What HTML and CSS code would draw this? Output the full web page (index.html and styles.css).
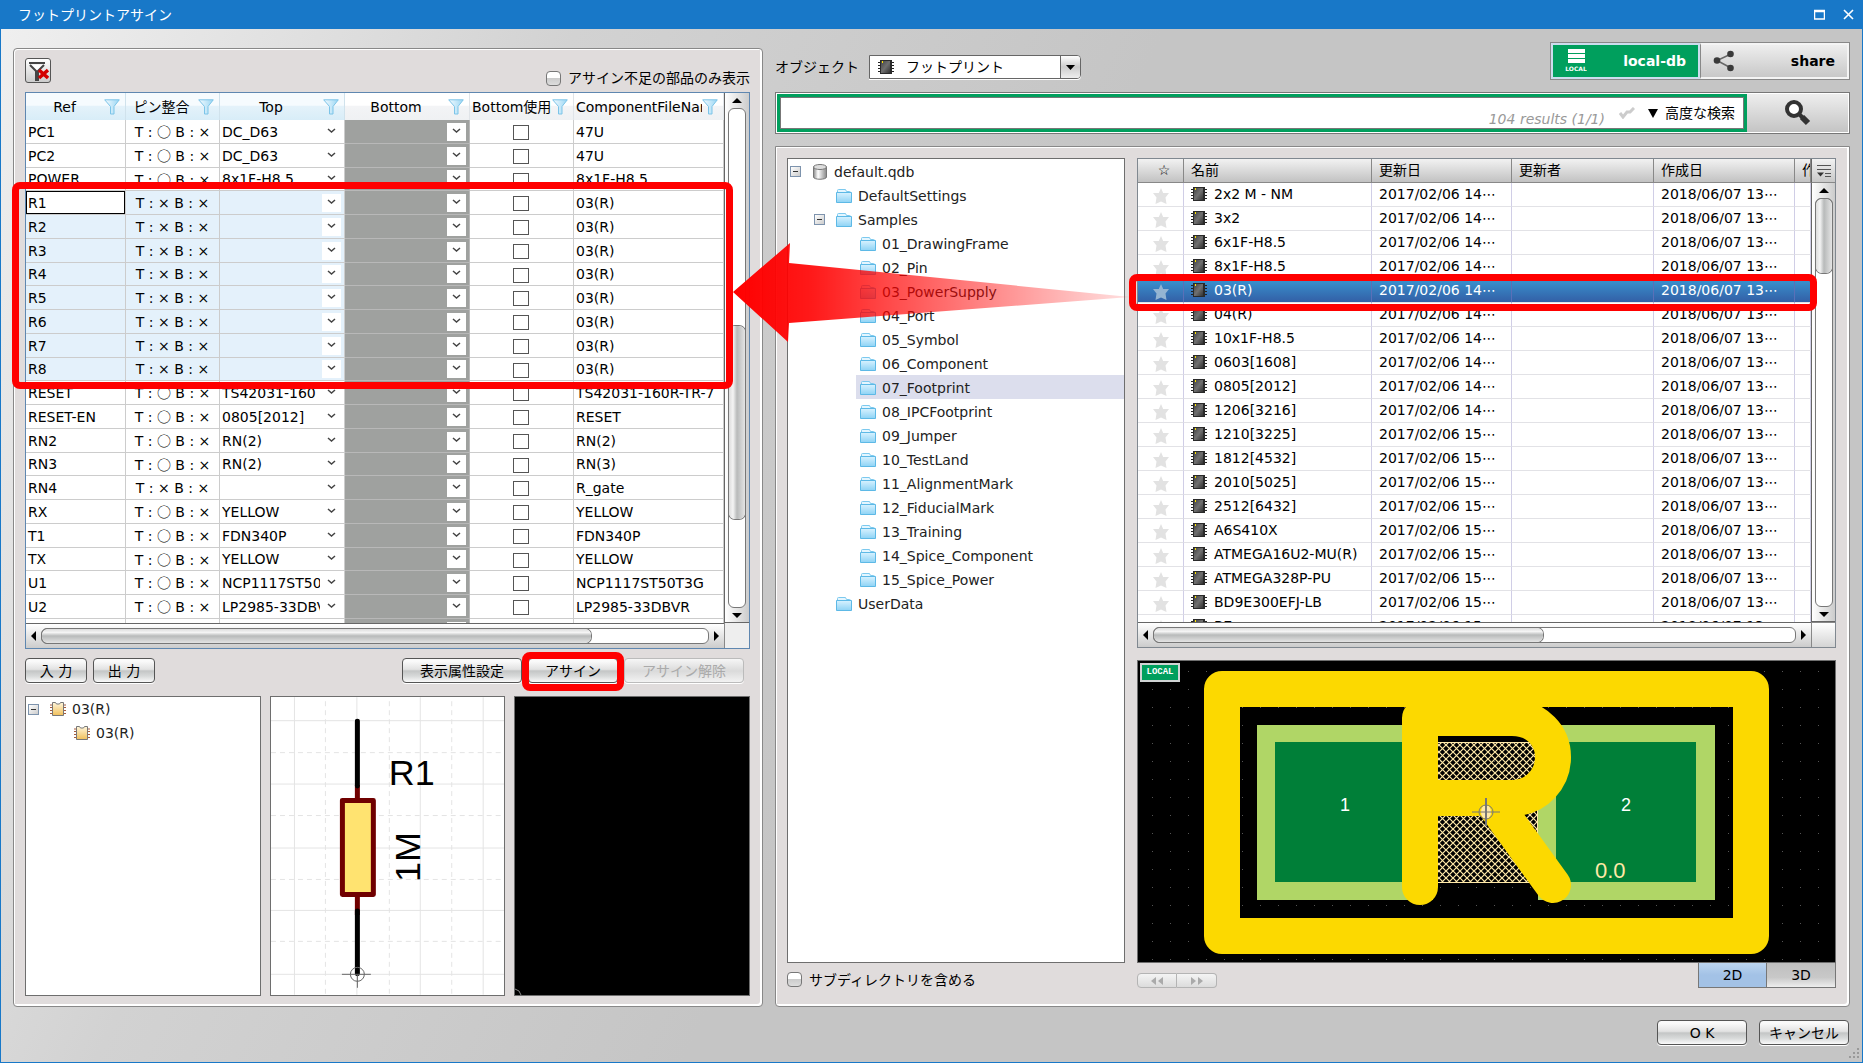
FILE: index.html
```html
<!DOCTYPE html>
<html lang="ja">
<head>
<meta charset="utf-8">
<title>フットプリントアサイン</title>
<link rel="stylesheet" href="styles.css">
</head>
<body>
<svg class="defs" width="0" height="0" aria-hidden="true">
  <defs>
    <linearGradient id="folderFill" x1="0" y1="0" x2="0" y2="1"><stop offset="0" stop-color="#d8f2ff"/><stop offset="1" stop-color="#8ed3f5"/></linearGradient>
    <linearGradient id="funnelFill" x1="0" y1="0" x2="1" y2="0"><stop offset="0" stop-color="#f4fbff"/><stop offset="1" stop-color="#9ad6f3"/></linearGradient>
    <linearGradient id="chipFill" x1="0" y1="0" x2="1" y2="1"><stop offset="0" stop-color="#444"/><stop offset=".5" stop-color="#707070"/><stop offset="1" stop-color="#333"/></linearGradient>
    <linearGradient id="partFill" x1="0" y1="0" x2="0" y2="1"><stop offset="0" stop-color="#fff6dc"/><stop offset="1" stop-color="#f0bf5a"/></linearGradient>
    <linearGradient id="dbFill" x1="0" y1="0" x2="1" y2="0"><stop offset="0" stop-color="#888"/><stop offset=".35" stop-color="#fff"/><stop offset="1" stop-color="#888"/></linearGradient>
    <symbol id="funnel" viewBox="0 0 16 16"><path d="M.7.8h14.6L10 7.5V15H6.500V7.500z" fill="url(#funnelFill)" stroke="#7cc4e8"/></symbol>
    <symbol id="folder" viewBox="0 0 16 14"><path d="M1.500 5V1.500q0-1 1-1H9.500l1 2h3q1 0 1 1V5" fill="#e4f6ff" stroke="#7cc9ee"/><path d="M.5 3.500h15v10H.5z" fill="url(#folderFill)" stroke="#5db9e6"/></symbol>
    <symbol id="chip" viewBox="0 0 16 14"><path d="M0 2.500h16M0 5.500h16M0 8.500h16M0 11.500h16" stroke="#222"/><path d="M2 0h12v14H2z" fill="#2a2a2a"/><path d="M3 1h9v12H3z" fill="url(#chipFill)"/><path d="M4.500 1v2" stroke="#ffe600"/></symbol>
    <symbol id="part" viewBox="0 0 16 14"><path d="M0 3h16M0 5.500h16M0 8.500h16M0 11.500h16" stroke="#a65b3c"/><path d="M2.500.5h3l1 1.500h3l1-1.500h3v13h-11z" fill="url(#partFill)" stroke="#777"/></symbol>
    <symbol id="database" viewBox="0 0 14 16"><path d="M.5 3v10c0 3 13 3 13 0V3z" fill="url(#dbFill)" stroke="#777"/><ellipse cx="7" cy="3" rx="6.500" ry="2.500" fill="#ddd" stroke="#777"/></symbol>
    <symbol id="star" viewBox="0 0 16 16"><path d="m8 0 2.200 5H16l-3.500 4.500 1 6.500L8 13.500 2.500 16l1-6.500L0 5h5.800z"/></symbol>
  </defs>
</svg>

<div class="window">
  <header class="titlebar">
    <h1>フットプリントアサイン</h1>
    <button class="caption" aria-label="最大化"><svg width="11" height="11" viewBox="0 0 11 11"><path d="M.5 1.500h10v8.500H.5zM0 2.500h11" fill="none" stroke="#fff" stroke-width="1.500"/></svg></button>
    <button class="caption" aria-label="閉じる"><svg width="11" height="11" viewBox="0 0 11 11"><path d="m1 1 9 9m0-9-9 9" stroke="#fff" stroke-width="1.600"/></svg></button>
  </header>

  <main class="workspace">
    <section class="panel assign">
      <div class="assign-top">
        <button class="clear-filter" aria-label="フィルタ解除"><svg width="22" height="20" viewBox="0 0 22 20"><path d="M2 2h16M3 4l6 6v9h2v-9l6-6" fill="#fff" stroke="#444" stroke-width="2"/><path d="m12 9 9 8m0-8-9 8" stroke="#d40000" stroke-width="3.500"/></svg></button>
        <label class="check"><input type="checkbox">アサイン不足の部品のみ表示</label>
      </div>

      <div class="grid parts-grid">
        <div class="viewport">
          <table class="parts">
            <colgroup><col class="p-ref"><col class="p-pin"><col class="p-top"><col class="p-bottom"><col class="p-use"><col class="p-file"></colgroup>
            <thead><tr>
              <th class="blue"><div><span>Ref</span><svg><use href="#funnel"/></svg></div></th>
              <th class="blue"><div><span>ピン整合</span><svg><use href="#funnel"/></svg></div></th>
              <th class="blue"><div><span>Top</span><svg><use href="#funnel"/></svg></div></th>
              <th><div><span>Bottom</span><svg><use href="#funnel"/></svg></div></th>
              <th><div class="tight"><span>Bottom使用</span><svg><use href="#funnel"/></svg></div></th>
              <th><div class="tight"><span>ComponentFileName</span><svg><use href="#funnel"/></svg></div></th>
            </tr></thead>
            <tbody id="parts-body"></tbody>
          </table>
        </div>
        <div class="vscroll"><i class="up"></i><div class="track"><b class="before"></b><b class="thumb"></b><b class="after"></b></div><i class="down"></i></div>
        <div class="hscroll"><i class="left"></i><div class="track"><b class="thumb"></b><b class="after"></b></div><i class="right"></i></div>
        <div class="corner"></div>
      </div>

      <div class="actions">
        <button class="btn small">入 力</button>
        <button class="btn small">出 力</button>
        <span class="grow"></span>
        <button class="btn wide">表示属性設定</button>
        <span class="marked"><button class="btn">アサイン</button><span class="mark mark-button"></span></span>
        <button class="btn wide" disabled>アサイン解除</button>
      </div>

      <div class="previews">
        <ul class="box tree">
          <li class="lv0"><button class="toggle" aria-label="折りたたむ"></button><svg class="ico"><use href="#part"/></svg>03(R)</li>
          <li class="lv1"><svg class="ico"><use href="#part"/></svg>03(R)</li>
        </ul>
        <div class="box schematic">
          <svg viewBox="0 0 234 298" role="img" aria-label="R1 1M">
            <g stroke="#e4e4e4" fill="none"><path d="M23.500 0v298M86 0v298M149.500 0v298M212.500 0v298M0 23.500h234M0 87h234M0 151h234M0 213.500h234M0 277.500h234"/><path stroke-dasharray="5 4" d="M54.500 4v294M118.500 4v294M181 4v294M0 55.500h234M0 118.500h234M0 182.500h234M0 244.500h234"/></g>
            <path d="M86.500 88v130" stroke="#700000" stroke-width="5"/>
            <path d="M86.500 24v65M86.500 214v63" stroke="#000" stroke-width="5" stroke-linecap="round"/>
            <path d="M71.500 103.500h31v94h-31z" fill="#ffe370" stroke="#700000" stroke-width="5" stroke-linejoin="round"/>
            <g fill="none" stroke="#666"><circle cx="86.500" cy="277.500" r="7"/><path d="M71 277.500h29M86.500 278v13"/></g>
            <text class="sch" x="118" y="88">R1</text>
            <text class="sch" transform="translate(149 185) rotate(-90)">1M</text>
          </svg>
        </div>
        <div class="box blank"><svg width="7" height="7" viewBox="0 0 7 7"><path d="M0 1q5 1 6 6" fill="none" stroke="#888"/></svg></div>
      </div>
      <span class="mark mark-rows"></span>
    </section>

    <section class="library">
      <div class="library-top">
        <div class="object">
          <label for="object">オブジェクト</label>
          <div class="combo"><svg class="ico"><use href="#chip"/></svg><select id="object"><option>フットプリント</option></select></div>
        </div>
        <span class="grow"></span>
        <div class="sources">
          <button class="source on"><svg width="22" height="24" viewBox="0 0 22 24"><path d="M3 2h17M3 7h17M3 12h17" stroke="#fff" stroke-width="4"/><text x="11" y="22" text-anchor="middle" class="tiny">LOCAL</text></svg>local-db</button>
          <button class="source"><svg width="22" height="22" viewBox="0 0 22 22"><path d="M18 4 4 10.500 18 18" fill="none" stroke="#666" stroke-width="1.500"/><g fill="#3a3a3a"><circle cx="17.500" cy="4" r="3.300"/><circle cx="4" cy="10.500" r="3.300"/><circle cx="17.500" cy="18" r="3.300"/></g></svg>share</button>
        </div>
      </div>

      <div class="search">
        <div class="search-field">
          <input type="text" aria-label="検索">
          <span class="results">104 results (1/1)</span>
          <svg width="16" height="12" viewBox="0 0 16 12"><path d="m1 6 3 4 4-5h3l4-4" fill="none" stroke="#ccc" stroke-width="3"/></svg>
          <button class="advanced"><i class="down"></i>高度な検索</button>
        </div>
        <button class="go" aria-label="検索する"><svg width="26" height="26" viewBox="0 0 26 26"><circle cx="9" cy="9" r="7" fill="#fff" stroke="#333" stroke-width="4"/><path d="m14 14 4 4" stroke="#333" stroke-width="4"/><path d="m17 17 6 6" stroke="#333" stroke-width="6"/></svg></button>
      </div>

      <div class="panel browser">
        <div class="tree-side">
          <ul class="box tree" id="folders"></ul>
          <label class="check"><input type="checkbox">サブディレクトリを含める</label>
        </div>
        <div class="list-side">
          <div class="grid list-grid">
            <div class="viewport">
              <table class="files">
                <colgroup><col class="f-star"><col class="f-name"><col class="f-upd"><col class="f-by"><col class="f-made"><col></colgroup>
                <thead><tr><th class="center">☆</th><th>名前</th><th>更新日</th><th>更新者</th><th>作成日</th><th>作成者</th></tr></thead>
                <tbody id="files-body"></tbody>
              </table>
            </div>
            <div class="vside">
              <button class="columns" aria-label="列の選択"><svg width="14" height="14" viewBox="0 0 14 14"><path d="M0 1.500h14M0 5.500h14M8 9.500h6M8 12.500h6" stroke="#555"/><path d="M0 8.500h7L3.500 12.500z" fill="#333"/></svg></button>
              <div class="vscroll"><i class="up"></i><div class="track"><b class="thumb"></b><b class="after"></b></div><i class="down"></i></div>
            </div>
            <div class="hscroll"><i class="left"></i><div class="track"><b class="thumb"></b><b class="after"></b></div><i class="right"></i></div>
            <div class="corner"></div>
            <span class="mark mark-file"></span>
          </div>

          <div class="box footprint">
            <svg viewBox="0 0 697 301" role="img" aria-label="03(R) フットプリント">
              <defs>
                <pattern id="dots" x="14" y="10" width="18" height="18" patternUnits="userSpaceOnUse"><path d="M0 0h1v1H0z" fill="#555"/></pattern>
                <pattern id="hatch" width="7" height="7" patternUnits="userSpaceOnUse"><path d="m-1-1 9 9m0-9-9 9" stroke="#ffe9a8" stroke-width="1.200"/></pattern>
              </defs>
              <path fill="url(#dots)" d="M0 0h697v301H0z"/>
              <path fill="#b0d666" d="M119 64h176v175H119zM400 64h177v175H400z"/>
              <path fill="#007f38" d="M137 81h140v140H137zM418 81h140v140H418z"/>
              <path fill="url(#hatch)" stroke="#ffe9a8" d="M295.500 81.500h104v140h-104z"/>
              <rect x="84" y="28" width="529" height="247" fill="none" stroke="#fcd900" stroke-width="36" stroke-linejoin="round"/>
              <path d="M282 226V57H374c25 0 41 18 41 39s-16 41-41 41H282M357 144l58 80" fill="none" stroke="#fcd900" stroke-width="36" stroke-linecap="round" stroke-linejoin="round"/>
              <text class="pad" x="207" y="150">1</text>
              <text class="pad" x="488" y="150">2</text>
              <text class="pad offset" x="457" y="217">0.0</text>
              <ellipse cx="348" cy="151" rx="5" ry="7" fill="#ffe9a8"/>
              <g fill="none" stroke="#777"><circle cx="348" cy="151" r="7"/><path d="M334 151h28"/><path d="M348 137v28" stroke-width="2"/></g>
            </svg>
            <span class="badge">LOCAL</span>
          </div>

          <div class="view-row">
            <div class="pager"><button disabled aria-label="前へ"><i class="left"></i><i class="left"></i></button><button disabled aria-label="次へ"><i class="right"></i><i class="right"></i></button></div>
            <span class="grow"></span>
            <button class="view on">2D</button><button class="view">3D</button>
          </div>
        </div>
      </div>
    </section>

    <svg class="arrow" viewBox="0 0 397 100" aria-hidden="true">
      <defs><linearGradient id="arrowFill"><stop offset="0" stop-color="#f00"/><stop offset=".2" stop-color="#f00" stop-opacity=".9"/><stop offset="1" stop-color="#f00" stop-opacity=".12"/></linearGradient></defs>
      <path fill="url(#arrowFill)" d="M0 49 57 0l-1 20 341 34L56 80l-1 19z"/>
    </svg>
  </main>

  <footer class="footer">
    <button class="btn">O K</button>
    <button class="btn">キャンセル</button>
    <svg class="grip" width="12" height="12" viewBox="0 0 12 12"><path d="M9 1h2v2H9zM5 5h2v2H5zM9 5h2v2H9zM1 9h2v2H1zM5 9h2v2H5zM9 9h2v2H9z" fill="#999"/></svg>
  </footer>
</div>
<script src="script.js"></script>
</body>
</html>
```
FILE: styles.css
```css
* { box-sizing: border-box; }

body {
  margin: 0;
  font: 14px/20px "DejaVu Sans", "Noto Sans CJK JP", sans-serif;
  color: #000;
}

button, input, select { font: inherit; color: inherit; margin: 0; }
button { padding: 0; }
ul { list-style: none; margin: 0; padding: 0; }
svg { display: block; flex: none; }
.defs { position: absolute; }
.grow { flex: 1; }
.ico { width: 16px; height: 14px; }

.window {
  display: flex;
  flex-direction: column;
  height: 100vh;
  min-height: 860px;
  min-width: 1500px;
  border: 1px solid #1878c8;
  border-top: 0;
  background: linear-gradient(115deg, #f0f0f0 0%, #d2d2d2 25%, #c5c5c5 50%, #c5c5c5 100%);
}

.titlebar {
  display: flex;
  align-items: center;
  gap: 18px;
  height: 29px;
  padding: 0 8px 0 17px;
  background: #1878c8;
  color: #fff;
}
.titlebar h1 { flex: 1; margin: 0; font-size: 14px; font-weight: 400; }
.caption { border: 0; background: none; }

.workspace {
  position: relative;
  flex: 1;
  min-height: 0;
  display: grid;
  grid-template-columns: 750fr 1075fr;
  gap: 12px;
  padding: 13px 12px 0;
}

.panel {
  border: 1px solid #888;
  background: #e0dcdc;
  box-shadow: inset 1px 1px #fff, inset -2px -2px #fff;
}

.box { border: 1px solid #6e6e6e; background: #fff; }

/* Assignment panel */
.assign {
  position: relative;
  display: flex;
  flex-direction: column;
  margin-top: 6px;
  padding: 0 12px 10px 11px;
  border-radius: 4px;
  min-height: 0;
}
.assign-top { display: flex; justify-content: space-between; height: 43px; padding-top: 9px; }
.clear-filter {
  display: grid;
  place-items: center;
  width: 26px;
  height: 25px;
  border: 1px solid #555;
  border-radius: 3px;
  background: linear-gradient(#fff, #ccc);
}
.check { display: flex; align-items: center; gap: 7px; }
.assign-top .check { align-self: flex-end; height: 28px; }
.check input {
  appearance: none;
  width: 15px;
  height: 15px;
  border: 1px solid #777;
  border-radius: 4px;
  background: linear-gradient(#fff 45%, #ccc 50%, #ddd);
}

/* Grids with scrollbars */
.grid {
  position: relative;
  display: grid;
  grid-template-columns: minmax(0, 1fr) 25px;
  grid-template-rows: minmax(0, 1fr) 25px;
  flex: 1;
  min-height: 0;
  background: #fff;
}
.parts-grid { border: 1px solid #5f87b0; }
.list-grid { border: 1px solid #808890; grid-template-columns: minmax(0, 1fr) 24px; }
.viewport { overflow: hidden; }
table { width: 100%; border-collapse: separate; border-spacing: 0; table-layout: fixed; }
th { font-weight: 400; padding: 0; text-align: left; white-space: nowrap; overflow: hidden; }
td { padding: 0; white-space: nowrap; overflow: hidden; }

.p-ref { width: 100px; }
.p-pin { width: 94px; }
.p-top, .p-bottom { width: 125px; }
.p-use { width: 104px; }
.parts th {
  height: 27px;
  border-right: 1px solid #e0e4e8;
  background: linear-gradient(#fff 45%, #f3f4f6 50%, #eff1f3);
}
.parts th.blue { background: linear-gradient(#f6fbfe 45%, #e4f2fa 50%, #d8edf8); border-right-color: #d0e2ec; }
.parts th div { display: flex; align-items: center; gap: 3px; padding: 1px 5px 0 2px; }
.parts th span { flex: 1; min-width: 0; overflow: hidden; text-align: center; }
.parts th .tight { gap: 0; }
.parts th .tight span { text-align: left; }
.parts th svg { width: 16px; height: 16px; }
.parts td { height: 24px; border: 1px solid #ccc; border-width: 0 1px 1px 0; padding: 0 0 0 2px; line-height: 18px; }
.parts tr:nth-child(4n+3) td { height: 23px; }
.parts td.pin { text-align: center; padding: 0; }
.pin span { font-family: "Noto Sans CJK JP", sans-serif; }
.parts td.use { padding: 0; }
.parts td.pick { padding: 0; }
.parts td.off { background: #9fa19f; border-color: #b8b8b8; }
.parts tr.sel td:nth-child(-n+3) { background: #e4f1fb; }
.parts tr.sel.current td:first-child { background: #fff; box-shadow: inset 0 0 0 1px #000; }
.parts select {
  display: block;
  appearance: none;
  width: 122px;
  height: 20px;
  padding: 0 22px 0 2px;
  border: 0;
  border-radius: 0;
  background: url("data:image/svg+xml,%3Csvg xmlns='http://www.w3.org/2000/svg' width='19' height='18'%3E%3Cpath fill='%23fff' d='M0 0h19v18H0z'/%3E%3Cpath d='M6 6l3.500 3L13 6' fill='none' stroke='%23444' stroke-width='1.500'/%3E%3C/svg%3E") no-repeat right 1px center;
}
.parts input {
  appearance: none;
  display: block;
  width: 16px;
  height: 15px;
  margin: 2px 0 0 43px;
  border: 1px solid #555;
  background: #fff;
}

.f-star { width: 46px; }
.f-name { width: 188px; }
.f-upd { width: 140px; }
.f-by { width: 142px; }
.f-made { width: 141px; }
.files th {
  height: 24px;
  padding-left: 7px;
  border: 1px solid #888;
  border-width: 0 1px 1px 0;
  background: linear-gradient(#f2f2f2, #c2c2c2);
  line-height: 23px;
}
.files th.center { text-align: center; }
.files td {
  height: 24px;
  padding: 0 0 2px 7px;
  border: 1px solid #e2e2e6;
  border-width: 0 1px 1px 0;
  border-right-color: #d0cee6;
  line-height: 20px;
}
.files .name { display: flex; align-items: center; gap: 7px; }
.files .star { width: 16px; height: 16px; margin: 4px 0 0 8px; fill: #e2e2e2; }
.files tr.sel td { background: linear-gradient(#3994d0, #335fa6); color: #fff; border-right-color: #5a70b8; }
.files tr.sel .star { fill: #94b4d2; }

/* Scrollbars */
.vscroll, .hscroll { display: flex; align-items: center; }
.vscroll { flex-direction: column; flex: 1; border-left: 1px solid #666; border-bottom: 1px solid #666; background: linear-gradient(90deg, #fff, #ccc); padding: 5px 0 4px; gap: 5px; }
.hscroll { border-top: 1px solid #666; background: linear-gradient(#fff, #ccc); padding: 0 5px; gap: 5px; }
.corner { border-left: 1px solid #888; background: #eee; }
.list-grid .corner { border-top: 1px solid #888; background: linear-gradient(#fff, #d4d4d4); }
.track { display: flex; flex: 1; border: 1px solid #777; border-radius: 6px; background: #fff; }
.vscroll .track { flex-direction: column; width: 18px; }
.hscroll .track { height: 16px; }
.thumb { border-radius: 6px; }
.vscroll .thumb { box-shadow: 0 0 0 1px #777; background: linear-gradient(90deg, #ddd, #f4f4f4 25%, #b8baba 50%, #e4e4e4); }
.hscroll .thumb { box-shadow: 0 0 0 1px #777; background: linear-gradient(#ddd, #f4f4f4 25%, #b8baba 50%, #e4e4e4); }
.parts-grid .vscroll .before { flex: 217; }
.parts-grid .vscroll .thumb { flex: 193; }
.parts-grid .vscroll .after { flex: 88; }
.parts-grid .hscroll .thumb { flex: 549; }
.parts-grid .hscroll .after { flex: 117; }
.list-grid .vscroll .thumb { flex: 75; }
.list-grid .vscroll .after { flex: 335; }
.list-grid .hscroll .thumb { flex: 390; }
.list-grid .hscroll .after { flex: 252; }
.vside { display: flex; flex-direction: column; min-height: 0; }
.columns {
  display: grid;
  place-items: center;
  height: 24px;
  border: 0;
  border-left: 1px solid #666;
  border-bottom: 1px solid #888;
  background: linear-gradient(#f2f2f2, #c8c8c8);
}

i { display: block; width: 0; height: 0; border: 0 solid transparent; }
i.up { border-width: 0 5px 5px; border-bottom-color: #000; }
i.down { border-width: 5px 5px 0; border-top-color: #000; }
i.left { border-width: 5px 5px 5px 0; border-right-color: #000; }
i.right { border-width: 5px 0 5px 5px; border-left-color: #000; }

/* Buttons */
.actions { display: flex; gap: 6px; padding: 9px 6px 13px 0; }
.btn {
  height: 25px;
  width: 90px;
  border: 1px solid #555;
  border-radius: 4px;
  background: linear-gradient(#fafafa 10%, #e2e2e2 45%, #c4c6c6 52%, #d8dada 75%, #fafafa);
  box-shadow: 0 1px #fff;
  line-height: 20px;
}
.btn.small { width: 62px; }
.btn.wide { width: 120px; }
.btn:disabled { color: #aaa; border-color: #bbb; background: linear-gradient(#f6f6f6, #dadada 52%, #f2f2f2); }
.marked { position: relative; display: flex; }

.previews { display: grid; grid-template-columns: repeat(3, minmax(0, 1fr)); gap: 9px; height: 300px; }
.schematic svg { width: 100%; height: 298px; }
.sch { font: 36px "Liberation Sans Narrow", "Liberation Sans", sans-serif; }
.blank { display: flex; align-items: flex-end; background: #000; }

/* Trees */
.tree li { display: flex; align-items: center; gap: 6px; height: 24px; color: #222; }
.tree .lv0 { padding-left: 2px; }
.tree .lv0 .toggle { margin-right: 5px; }
.tree .lv1 { padding-left: 48px; }
.toggle {
  width: 11px;
  height: 11px;
  border: 1px solid #7d93ad;
  background: linear-gradient(#333, #333) center / 5px 1px no-repeat, linear-gradient(135deg, #fff, #ccc);
}
#folders li { padding-top: 1px; }
#folders .toggle { margin-right: 5px; }
#folders .db { width: 14px; height: 16px; margin: 0 1px; }
#folders .lv1 { padding-left: 48px; }
#folders .lv1.open { padding-left: 26px; }
#folders .lv2 { padding-left: 4px; margin-left: 68px; }
#folders .sel { background: #dcdeed; }

/* Library */
.library { display: flex; flex-direction: column; gap: 12px; min-width: 0; min-height: 0; }
.library-top { display: flex; align-items: flex-end; height: 38px; }
.object { display: flex; align-items: center; gap: 10px; padding-bottom: 1px; }
.combo {
  display: flex;
  align-items: center;
  width: 212px;
  height: 24px;
  padding-left: 8px;
  border: 1px solid #666;
  border-radius: 0 4px 4px 0;
  background: #fff;
  box-shadow: 0 1px #fff;
}
.combo select {
  flex: 1;
  appearance: none;
  height: 22px;
  padding: 0 24px 0 12px;
  border: 0;
  border-radius: 0 3px 3px 0;
  background: url("data:image/svg+xml,%3Csvg xmlns='http://www.w3.org/2000/svg' width='20' height='22'%3E%3ClinearGradient id='g' x2='0' y2='1'%3E%3Cstop stop-color='%23fff'/%3E%3Cstop offset='.5' stop-color='%23ccc'/%3E%3Cstop offset='1' stop-color='%23eee'/%3E%3C/linearGradient%3E%3Cpath fill='url(%23g)' d='M0 0h20v22H0z'/%3E%3Cpath d='M.5 0v22' stroke='%23666'/%3E%3Cpath d='M6 9h9l-4.500 5z'/%3E%3C/svg%3E") no-repeat right center;
}
.sources { display: flex; border: 1px solid #888; background: #fff; }
.source {
  display: flex;
  align-items: center;
  justify-content: space-between;
  width: 149px;
  height: 36px;
  padding: 0 12px;
  border: 2px solid #f4f4f4;
  border-left: 1px solid #888;
  background: linear-gradient(#eee, #c8c8c8);
  font-weight: 700;
}
.source.on { border: 2px solid #cde; background: #009f5d; color: #fff; }
.tiny { font: 700 6px "DejaVu Sans", sans-serif; fill: #fff; }

.search { display: flex; height: 42px; padding: 1px; border: 1px solid #777; background: #fff; }
.search-field {
  flex: 1;
  display: flex;
  align-items: center;
  padding-right: 9px;
  border: 3px solid #009f5d;
  box-shadow: inset 0 0 0 1px #777;
}
.search-field input { flex: 1; min-width: 0; height: 28px; margin-left: 2px; border: 0; background: none; }
.results { align-self: flex-end; margin-right: 14px; font-style: italic; color: #999; }
.advanced { display: flex; align-items: center; gap: 7px; margin-left: 13px; border: 0; background: none; }
.advanced i.down { border-width: 9px 5px 0; }
.go { display: grid; place-items: center; width: 101px; border: 0; background: linear-gradient(#eee, #c4c4c4); }

.browser {
  flex: 1;
  min-height: 0;
  display: grid;
  grid-template-columns: 338fr 699fr;
  gap: 12px;
  padding: 11px 13px 18px 11px;
  border-radius: 0 0 4px 4px;
}
.tree-side, .list-side { display: flex; flex-direction: column; min-height: 0; min-width: 0; }
.tree-side .tree { flex: 1; }
.tree-side .check { height: 25px; padding-top: 8px; }

.footprint { position: relative; margin-top: 12px; height: 303px; background: #000; }
.footprint svg { width: 100%; height: 301px; }
.pad { font: 18px "Liberation Sans Narrow", "Liberation Sans", sans-serif; text-anchor: middle; fill: #fff; }
.pad.offset { font-size: 22px; fill: #ffe9a8; text-anchor: start; }
.badge {
  position: absolute;
  left: 2px;
  top: 2px;
  width: 40px;
  height: 19px;
  border: 2px solid #d0d4d4;
  background: #009f5d;
  color: #fff;
  font: 700 9px/15px "Liberation Mono", monospace;
  text-align: center;
}
.view-row { display: flex; height: 25px; }
.view { width: 69px; border: 1px solid #777; border-top: 0; background: linear-gradient(#bfbfbf, #c8c8c8 60%, #eee); }
.view + .view { border-left: 0; }
.view.on { background: linear-gradient(#bcd5ef, #a3c2e6 50%, #a3c2e6); }
.pager { display: flex; align-self: flex-end; }
.pager button {
  display: flex;
  justify-content: center;
  align-items: center;
  gap: 2px;
  width: 40px;
  height: 15px;
  border: 1px solid #b4b4b4;
  border-radius: 4px 0 0 4px;
  background: linear-gradient(#f4f4f4, #dcdcdc);
}
.pager button + button { border-radius: 0 4px 4px 0; border-left: 0; }
.pager i.left { border-width: 4px 5px 4px 0; border-right-color: #aaa; }
.pager i.right { border-width: 4px 0 4px 5px; border-left-color: #aaa; }

.footer { position: relative; display: flex; justify-content: flex-end; gap: 12px; padding: 13px 13px 17px; }
.grip { position: absolute; right: 2px; bottom: 3px; }

/* Callouts drawn over the dialog */
.mark { position: absolute; border: 7px solid #f00; border-radius: 8px; pointer-events: none; z-index: 2; }
.mark-rows { left: -2px; right: 29px; top: 133px; height: 207px; }
.mark-button { left: -6px; right: -6px; top: -6px; bottom: -8px; }
.mark-file { left: -9px; right: 18px; top: 115px; height: 37px; }
.arrow { position: absolute; left: 732px; top: 214px; width: 397px; height: 100px; pointer-events: none; z-index: 3; }
```
FILE: script.js
```js
const O = '○', X = '×';
const parts = [
  ['PC1', O, 'DC_D63', '47U'],
  ['PC2', O, 'DC_D63', '47U'],
  ['POWER', O, '8x1F-H8.5', '8x1F-H8.5'],
  ...[1, 2, 3, 4, 5, 6, 7, 8].map(n => ['R' + n, X, '', '03(R)']),
  ['RESET', O, 'TS42031-160', 'TS42031-160R-TR-7'],
  ['RESET-EN', O, '0805[2012]', 'RESET'],
  ['RN2', O, 'RN(2)', 'RN(2)'],
  ['RN3', O, 'RN(2)', 'RN(3)'],
  ['RN4', X, '', 'R_gate'],
  ['RX', O, 'YELLOW', 'YELLOW'],
  ['T1', O, 'FDN340P', 'FDN340P'],
  ['TX', O, 'YELLOW', 'YELLOW'],
  ['U1', O, 'NCP1117ST50T3G', 'NCP1117ST50T3G'],
  ['U2', O, 'LP2985-33DBVR', 'LP2985-33DBVR'],
  ['', '', '', '']
];
document.getElementById('parts-body').innerHTML = parts.map(([ref, pin, top, file]) => {
  const cls = /^R\d$/.test(ref) ? 'sel' + (ref === 'R1' ? ' current' : '') : '';
  const mark = pin === O ? `<span>${O}</span>` : X;
  return `<tr class="${cls}"><td>${ref}</td><td class="pin">${pin && `T : ${mark} B : ×`}</td>
    <td class="pick"><select aria-label="${ref} Top"><option>${top}</option></select></td>
    <td class="pick off"><select aria-label="${ref} Bottom"><option></option></select></td>
    <td class="use"><input type="checkbox" aria-label="${ref} Bottom使用"></td><td>${file}</td></tr>`;
}).join('');

const names = ['2x2 M - NM', '3x2', '6x1F-H8.5', '8x1F-H8.5', '03(R)', '04(R)', '10x1F-H8.5', '0603[1608]',
  '0805[2012]', '1206[3216]', '1210[3225]', '1812[4532]', '2010[5025]', '2512[6432]', 'A6S410X',
  'ATMEGA16U2-MU(R)', 'ATMEGA328P-PU', 'BD9E300EFJ-LB', 'B7'];
document.getElementById('files-body').innerHTML = names.map((name, i) =>
  `<tr class="${name === '03(R)' ? 'sel' : ''}"><td><svg class="star"><use href="#star"/></svg></td>
    <td><div class="name"><svg class="ico"><use href="#chip"/></svg>${name}</div></td>
    <td>2017/02/06 ${i < 10 ? 14 : 15}⋯</td><td></td><td>2018/06/07 13⋯</td><td></td></tr>`).join('');

const samples = ['01_DrawingFrame', '02_Pin', '03_PowerSupply', '04_Port', '05_Symbol', '06_Component',
  '07_Footprint', '08_IPCFootprint', '09_Jumper', '10_TestLand', '11_AlignmentMark', '12_FiducialMark',
  '13_Training', '14_Spice_Component', '15_Spice_Power'];
const toggle = '<button class="toggle" aria-label="折りたたむ"></button>';
const folder = '<svg class="ico"><use href="#folder"/></svg>';
document.getElementById('folders').innerHTML =
  `<li class="lv0">${toggle}<svg class="db"><use href="#database"/></svg>default.qdb</li>` +
  `<li class="lv1">${folder}DefaultSettings</li><li class="lv1 open">${toggle}${folder}Samples</li>` +
  samples.map(s => `<li class="lv2${s === '07_Footprint' ? ' sel' : ''}">${folder}${s}</li>`).join('') +
  `<li class="lv1">${folder}UserData</li>`;
```
